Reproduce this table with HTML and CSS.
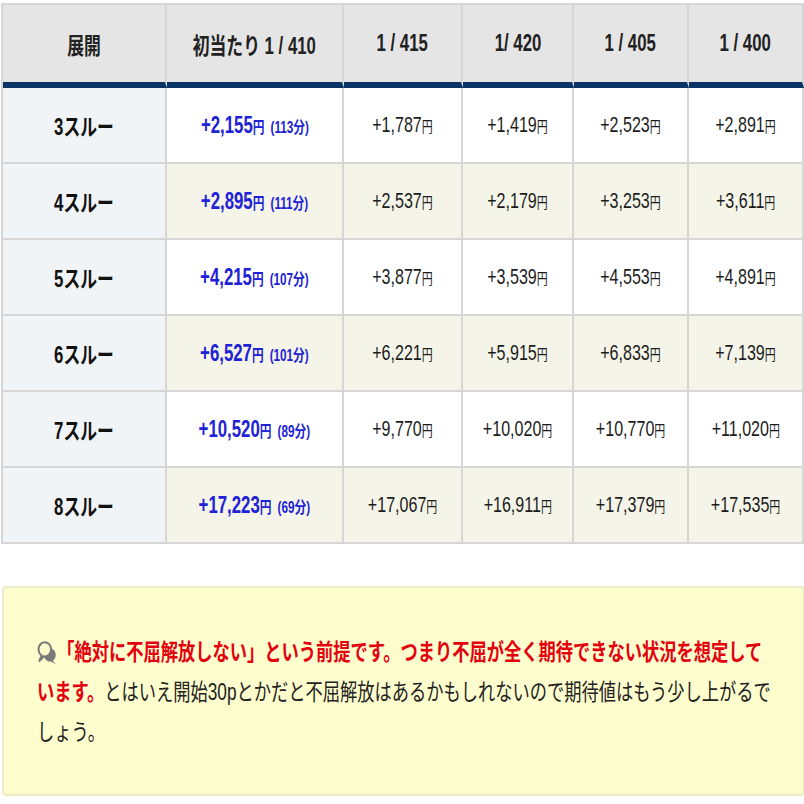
FILE: index.html
```html
<!DOCTYPE html>
<html lang="ja">
<head>
<meta charset="utf-8">
<title>期待値表</title>
<link rel="stylesheet" href="styles.css">
</head>
<body>
<div class="page">
  <table class="tbl">
    <colgroup>
      <col class="c1"><col class="c2"><col class="c3"><col class="c4"><col class="c5"><col class="c6">
    </colgroup>
    <thead>
      <tr>
        <th><span class="sq">展開</span></th>
        <th><span class="sq">初当たり 1 / 410</span></th>
        <th><span class="sq">1 / 415</span></th>
        <th><span class="sq">1/ 420</span></th>
        <th><span class="sq">1 / 405</span></th>
        <th><span class="sq">1 / 400</span></th>
      </tr>
    </thead>
    <tbody>
      <tr>
        <th class="lbl"><span class="sq">3スルー</span></th>
        <td><span class="sq main">+2,155<span class="yen">円</span> <span class="min">(113分)</span></span></td>
        <td><span class="sq">+1,787<span class="yen">円</span></span></td>
        <td><span class="sq">+1,419<span class="yen">円</span></span></td>
        <td><span class="sq">+2,523<span class="yen">円</span></span></td>
        <td><span class="sq">+2,891<span class="yen">円</span></span></td>
      </tr>
      <tr class="alt">
        <th class="lbl"><span class="sq">4スルー</span></th>
        <td><span class="sq main">+2,895<span class="yen">円</span> <span class="min">(111分)</span></span></td>
        <td><span class="sq">+2,537<span class="yen">円</span></span></td>
        <td><span class="sq">+2,179<span class="yen">円</span></span></td>
        <td><span class="sq">+3,253<span class="yen">円</span></span></td>
        <td><span class="sq">+3,611<span class="yen">円</span></span></td>
      </tr>
      <tr>
        <th class="lbl"><span class="sq">5スルー</span></th>
        <td><span class="sq main">+4,215<span class="yen">円</span> <span class="min">(107分)</span></span></td>
        <td><span class="sq">+3,877<span class="yen">円</span></span></td>
        <td><span class="sq">+3,539<span class="yen">円</span></span></td>
        <td><span class="sq">+4,553<span class="yen">円</span></span></td>
        <td><span class="sq">+4,891<span class="yen">円</span></span></td>
      </tr>
      <tr class="alt">
        <th class="lbl"><span class="sq">6スルー</span></th>
        <td><span class="sq main">+6,527<span class="yen">円</span> <span class="min">(101分)</span></span></td>
        <td><span class="sq">+6,221<span class="yen">円</span></span></td>
        <td><span class="sq">+5,915<span class="yen">円</span></span></td>
        <td><span class="sq">+6,833<span class="yen">円</span></span></td>
        <td><span class="sq">+7,139<span class="yen">円</span></span></td>
      </tr>
      <tr>
        <th class="lbl"><span class="sq">7スルー</span></th>
        <td><span class="sq main">+10,520<span class="yen">円</span> <span class="min">(89分)</span></span></td>
        <td><span class="sq">+9,770<span class="yen">円</span></span></td>
        <td><span class="sq">+10,020<span class="yen">円</span></span></td>
        <td><span class="sq">+10,770<span class="yen">円</span></span></td>
        <td><span class="sq">+11,020<span class="yen">円</span></span></td>
      </tr>
      <tr class="alt">
        <th class="lbl"><span class="sq">8スルー</span></th>
        <td><span class="sq main">+17,223<span class="yen">円</span> <span class="min">(69分)</span></span></td>
        <td><span class="sq">+17,067<span class="yen">円</span></span></td>
        <td><span class="sq">+16,911<span class="yen">円</span></span></td>
        <td><span class="sq">+17,379<span class="yen">円</span></span></td>
        <td><span class="sq">+17,535<span class="yen">円</span></span></td>
      </tr>
    </tbody>
  </table>

  <div class="note">
    <p class="note-text"><svg class="talk" viewBox="0 0 22 24" width="27" height="25" preserveAspectRatio="none" aria-hidden="true"><path d="M15.1 20.7 A6.3 6.3 0 1 1 17.15 19.96 L20.5 23 Z" fill="#7a7a7a"/><path d="M7.3 15.7 A6.8 6.8 0 1 0 5.1 14.9 L2.6 20 Z" fill="#fefdcd" stroke="#7a7a7a" stroke-width="2.1" stroke-linejoin="round"/></svg><strong class="red">「絶対に不屈解放しない」という前提です。つまり不屈が全く期待できない状況を想定しています。</strong>とはいえ開始30pとかだと不屈解放はあるかもしれないので期待値はもう少し上がるでしょう。</p>
  </div>
</div>
</body>
</html>
```

FILE: styles.css
```css
html, body {
  margin: 0;
  padding: 0;
  background: #ffffff;
}

body {
  font-family: "Liberation Sans", "Noto Sans CJK JP", sans-serif;
  color: #1a1a1a;
  overflow: hidden;
}

.page {
  padding: 3px 0 0 1px;
  width: 803px;
}

.tbl {
  width: 801px;
  table-layout: fixed;
  border-collapse: separate;
  border-spacing: 0;
  border-top: 2px solid #d6d6d6;
  border-left: 2px solid #d6d6d6;
}

.c1 { width: 164px; }
.c2 { width: 177px; }
.c3 { width: 119px; }
.c4 { width: 111px; }
.c5 { width: 115px; }
.c6 { width: 115px; }

.tbl th,
.tbl td {
  padding: 0;
  text-align: center;
  vertical-align: middle;
  border-right: 2px solid #d6d6d6;
  border-bottom: 2px solid #d6d6d6;
  box-sizing: border-box;
}

.tbl thead th {
  height: 83px;
  background: #e5e5e5;
  border-bottom: 6px solid #0c3365;
  font-size: 23px;
  font-weight: bold;
  color: #222222;
}

.tbl tbody th,
.tbl tbody td {
  height: 76px;
}

.tbl tbody td {
  background: #ffffff;
  font-size: 22px;
  color: #1c1c1c;
}

.tbl tbody tr.alt td {
  background: #f4f4e8;
}

.tbl .lbl {
  background: #f1f4f7;
  font-size: 23px;
  font-weight: bold;
  color: #111111;
}

.sq {
  display: inline-block;
  white-space: nowrap;
  transform: scaleX(0.73);
  transform-origin: center;
}

.yen {
  font-size: 15px;
}

.main {
  color: #2121d6;
  font-weight: bold;
  font-size: 23px;
}

.main .yen {
  font-size: 16px;
}

.min {
  font-size: 16px;
  margin-left: 2px;
}

.note {
  margin: 42px 0 0 1px;
  width: 803px;
  box-sizing: border-box;
  background: #fefdcd;
  border: 2px solid #ecebc6;
  border-radius: 4px;
  padding: 44px 0 42px 33px;
}

.note-text {
  margin: 0;
  width: 986px;
  font-size: 23px;
  line-height: 40px;
  color: #222222;
  transform: scaleX(0.75);
  transform-origin: left center;
}

.talk {
  vertical-align: -5px;
  margin-right: 0;
}

.red {
  color: #e3000f;
  font-weight: bold;
}
```
